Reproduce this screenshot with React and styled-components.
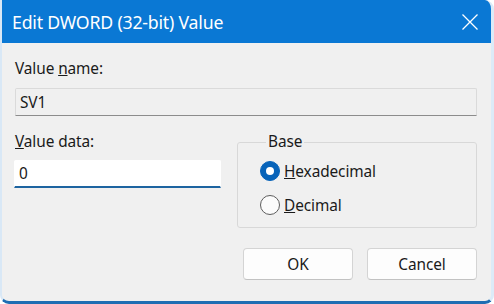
import React from "react";
import styled, { createGlobalStyle } from "styled-components";

const Global = createGlobalStyle`
  html, body { margin: 0; padding: 0; background: #ffffff; }
  body { font-family: "Noto Sans", "Open Sans", Arial, sans-serif; }
  * { box-sizing: border-box; }
`;

const Window = styled.div`
  width: 494px;
  height: 304px;
  display: flex;
  flex-direction: column;
  background: #f0f0f0;
  border-radius: 0 9px 9px 9px;
  border-left: 2px solid #d9e8f6;
  border-right: 3px solid #dcebf8;
  border-bottom: 3px solid #1f6db3;
  overflow: hidden;
`;

const TitleBar = styled.div`
  height: 43px;
  flex: none;
  background: #0a78d4;
  color: #ffffff;
  display: flex;
  align-items: center;
  justify-content: space-between;
  padding: 0 15px 0 12px;
  margin-left: -2px;
  margin-right: -3px;
  font-size: 17.7px;
  letter-spacing: -0.2px;
`;

const CloseIcon = styled.svg`
  width: 18px;
  height: 18px;
  display: block;
`;

const Body = styled.div`
  flex: 1;
  display: flex;
  flex-direction: column;
  padding: 16px 14px 0 12px;
  color: #1a1a1a;
  font-size: 15.4px;
  letter-spacing: -0.1px;
`;

const Label = styled.div`
  line-height: 20px;
  height: 20px;
  padding-left: 1px;
`;

const TextBox = styled.div`
  height: 28px;
  display: flex;
  align-items: center;
  padding-left: 4px;
  background: ${(p) => (p.$active ? "#ffffff" : "#f0f0f0")};
  border: 1px solid ${(p) => (p.$active ? "#ffffff" : "#dadada")};
  border-bottom: ${(p) => (p.$active ? "2px solid #1d64a0" : "1px solid #8c8c8c")};
  border-radius: 2px 2px 0 0;
  width: ${(p) => (p.$width ? p.$width + "px" : "auto")};
`;

const NameBox = styled(TextBox)`
  margin-top: 9px;
  margin-left: 1px;
`;

const Row = styled.div`
  display: flex;
  gap: 16px;
  margin-top: 16px;
`;

const Column = styled.div`
  display: flex;
  flex-direction: column;
  gap: 8px;
`;

const Group = styled.fieldset`
  flex: 1;
  margin: 0;
  padding: 5px 0 8px 22px;
  border: 1px solid #d8d8d8;
  border-radius: 3px;
  display: flex;
  flex-direction: column;
  gap: 6px;
`;

const Legend = styled.legend`
  padding: 0 2px;
  margin-left: 6px;
  line-height: 20px;
`;

const RadioRow = styled.div`
  height: 28px;
  display: flex;
  align-items: center;
  gap: 4px;
`;

const RadioCircle = styled.span`
  width: 20px;
  height: 20px;
  border-radius: 50%;
  flex: none;
  display: flex;
  align-items: center;
  justify-content: center;
  background: ${(p) => (p.$checked ? "#0763b9" : "#fbfbfb")};
  border: 1px solid ${(p) => (p.$checked ? "#0763b9" : "#5d5d5d")};
  &::after {
    content: "";
    display: ${(p) => (p.$checked ? "block" : "none")};
    width: 8px;
    height: 8px;
    border-radius: 50%;
    background: #ffffff;
  }
`;

const ButtonRow = styled.div`
  display: flex;
  justify-content: flex-end;
  gap: 14px;
  margin-top: 20px;
`;

const Button = styled.div`
  width: 110px;
  height: 32px;
  display: flex;
  align-items: center;
  justify-content: center;
  background: #fdfdfd;
  border: 1px solid #d4d4d4;
  border-bottom-color: #c2c2c2;
  border-radius: 4px;
`;

export default function App() {
  return (
    <>
      <Global />
      <Window>
        <TitleBar>
          <span>Edit DWORD (32-bit) Value</span>
          <CloseIcon viewBox="0 0 18 18">
            <path d="M1.5 1.5 L16.5 16.5 M16.5 1.5 L1.5 16.5" stroke="#ffffff" strokeWidth="1.3" fill="none" />
          </CloseIcon>
        </TitleBar>
        <Body>
          <Label>
            Value <u>n</u>ame:
          </Label>
          <NameBox>SV1</NameBox>
          <Row>
            <Column>
              <Label>
                <u>V</u>alue data:
              </Label>
              <TextBox $active $width={207}>0</TextBox>
            </Column>
            <Group>
              <Legend>Base</Legend>
              <RadioRow>
                <RadioCircle $checked />
                <span>
                  <u>H</u>exadecimal
                </span>
              </RadioRow>
              <RadioRow>
                <RadioCircle />
                <span>
                  <u>D</u>ecimal
                </span>
              </RadioRow>
            </Group>
          </Row>
          <ButtonRow>
            <Button>OK</Button>
            <Button>Cancel</Button>
          </ButtonRow>
        </Body>
      </Window>
    </>
  );
}
